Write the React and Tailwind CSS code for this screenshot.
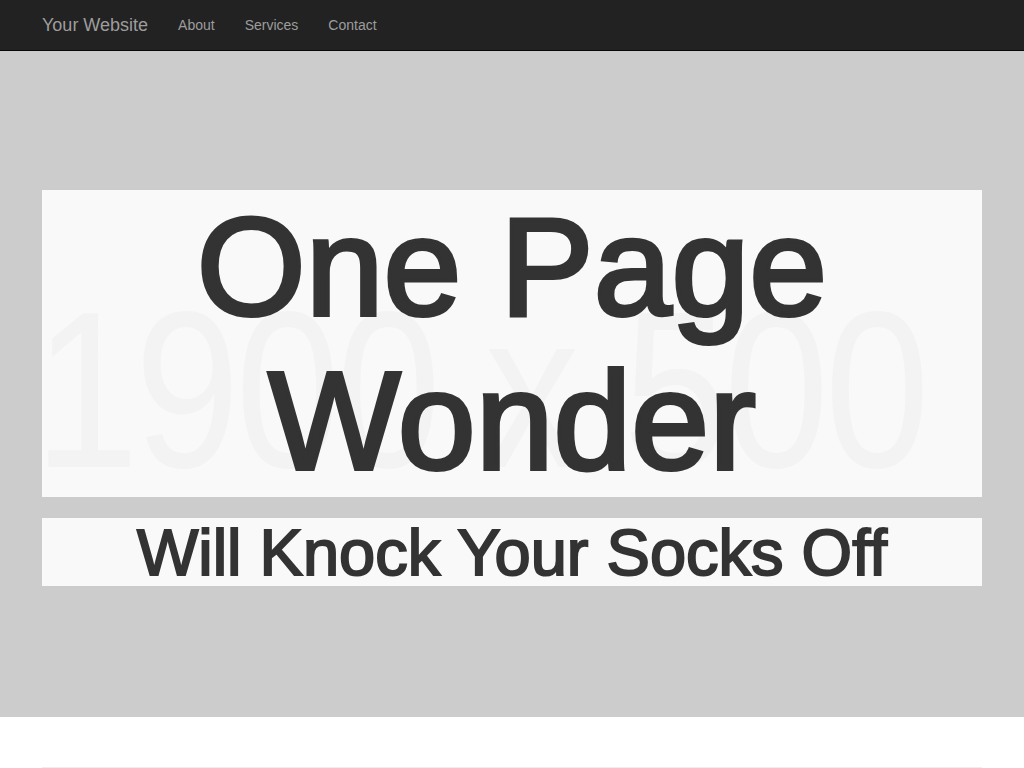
import React from 'react';

const links = ["About", "Services", "Contact"];

const App = () => {
  return (
    <div className="min-h-screen bg-white font-['Liberation_Sans',Arial,sans-serif] text-[#333]">
      {/* Navbar */}
      <nav className="h-[51px] bg-[#222] border-b border-[#080808]">
        <div className="flex items-center h-[50px] px-[42px]">
          <a href="#" className="text-[18px] text-[#9d9d9d] leading-[20px]">Your Website</a>
          <ul className="flex items-center ml-[15px]">
            {links.map((l) => (
              <li key={l}>
                <a href="#" className="block px-[15px] text-[14px] text-[#9d9d9d] leading-[20px]">{l}</a>
              </li>
            ))}
          </ul>
        </div>
      </nav>

      {/* Header image */}
      <header className="relative h-[666px] bg-[#ccc] px-[42px] pt-[139px] text-center">
        <div className="relative bg-[#f9f9f9] h-[307px] overflow-hidden">
          {/* placeholder label of the image behind */}
          <span className="absolute left-[-8px] top-[89px] origin-left scale-x-[0.85] text-[222px] leading-none whitespace-nowrap tracking-[-5px] text-[#f3f3f3] select-none">
            1900 x 500
          </span>
          <h1 className="relative text-[140px] leading-[154px] font-normal [-webkit-text-stroke:4px_#333]">
            One Page<br />Wonder
          </h1>
        </div>
        <div className="mt-[21px] bg-[#f9f9f9] h-[68px]">
          <h2 className="text-[65px] leading-[70px] font-normal [-webkit-text-stroke:2px_#333]">Will Knock Your Socks Off</h2>
        </div>
      </header>

      {/* Page content */}
      <div className="px-[42px] pt-[50px]">
        <hr className="border-0 border-t border-[#eee]" />
      </div>
    </div>
  );
};

export default App;
